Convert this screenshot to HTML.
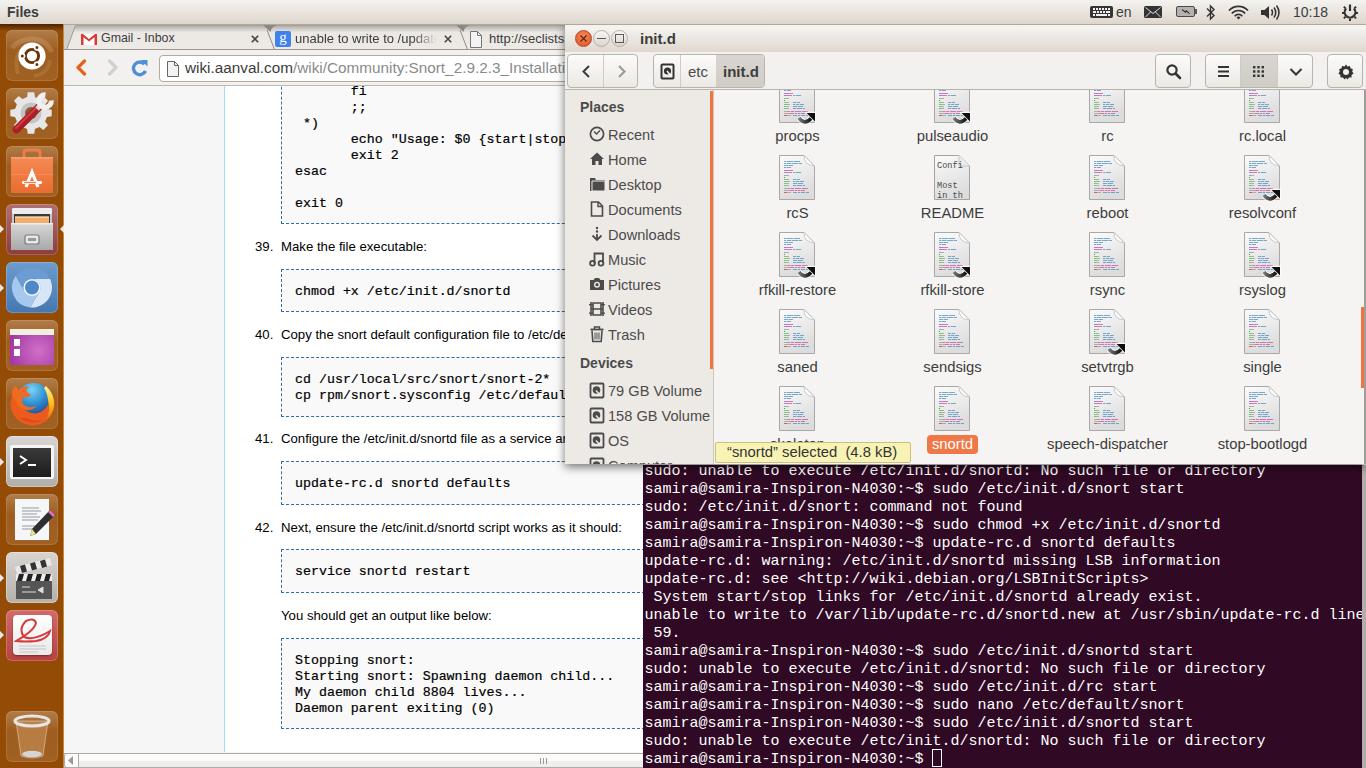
<!DOCTYPE html>
<html><head><meta charset="utf-8">
<style>
*{margin:0;padding:0;box-sizing:border-box}
html,body{width:1366px;height:768px;overflow:hidden;background:#f6f6f6;font-family:"Liberation Sans",sans-serif}
.a{position:absolute}
#panel{left:0;top:0;width:1366px;height:25px;background:linear-gradient(#f4f3f0,#ddd6cc);border-bottom:1px solid #b1a89c}
#launcher{left:0;top:24px;width:64px;height:744px;background:#934b05}
#chrome{left:64px;top:24px;width:1302px;height:744px;background:#f6f6f6}
#tabbar{left:0;top:0;width:1302px;height:26px;background:linear-gradient(#bfbab0,#d8d4cc)}
#toolbar{left:0;top:25px;width:1302px;height:37px;background:#f2f1ef;border-top:1px solid #9c978d;border-bottom:1px solid #bdb9b1}
#page{left:0;top:62px;width:1302px;height:666px;background:#f6f6f6;overflow:hidden}
#hscroll{left:0;top:729px;width:1302px;height:15px;background:linear-gradient(#fbfaf8 50%,#efeeeb 50%);border-top:1px solid #aaa;border-bottom:1px solid #aaa}
#fm{left:565px;top:24px;width:801px;height:440px;background:#f5f4f2;overflow:hidden;box-shadow:0 3px 9px rgba(0,0,0,.55)}
#term{left:643px;top:465px;width:723px;height:303px;background:#300a24;overflow:hidden}
.tab{position:absolute;top:2px;height:24px;width:205px}
.tabt{position:absolute;top:7px;font-size:13px;color:#3c3c3c;white-space:nowrap;overflow:hidden}
.tabx{position:absolute;top:3px;font-size:15px;color:#444}
#url{left:95px;top:5px;width:1200px;height:27px;background:#fff;border:1px solid #b5aa9c;border-radius:4px}
#url span.u{position:absolute;left:25px;top:3px;font-size:15.3px;color:#3c3c3c;white-space:nowrap}
#url span.g{color:#8a8a8a}
/* page */
#leftcol{left:0;top:0;width:160px;height:666px;background:#f6f6f6}
#content{left:160px;top:0;width:1142px;height:666px;background:#fff;border-left:1px solid #a7d7f9}
pre.p{position:absolute;left:217px;background:#f9f9f9;border:1px dashed #2f6fab;font-family:"Liberation Mono",monospace;font-size:13.3px;line-height:16px;-webkit-text-stroke:.2px #000;color:#000;width:700px}
.li{position:absolute;font-size:13.2px;color:#000;white-space:nowrap}

#fmtitle{left:0;top:0;width:801px;height:28px;background:linear-gradient(#f4f3f0 10%,#dfd8cf);border-top:1px solid #c7c1b8}
#fmtool{left:0;top:28px;width:801px;height:38px;background:#f2f1ef;border-bottom:1px solid #b8b3ab}
#side{left:0;top:66px;width:149px;height:374px;background:#edeae6;border-right:1px solid #c9c5bf}
#files{left:150px;top:66px;width:651px;height:374px;background:#f5f4f2;overflow:hidden;border-right:2px solid #a39e95}
.wb{position:absolute;top:5px;width:17px;height:17px;border-radius:50%}
.btn{position:absolute;border:1px solid #b9b4ac;border-radius:4px;background:linear-gradient(#fbfbfa,#ece9e5);height:34px;top:2px;overflow:hidden}
.sep{position:absolute;top:0;width:1px;height:32px;background:#cfcac3}
.sh{position:absolute;left:15px;font-weight:bold;font-size:14px;color:#4b4b4b}
.si{position:absolute;left:43px;font-size:14.6px;color:#4b4b4b;white-space:nowrap}
.sic{position:absolute;left:24px}
.fi{position:absolute;width:155px;text-align:center}
.fi svg{display:block;margin:0 auto}
.fl{font-size:14.8px;color:#3c3c3c;margin-top:4px;line-height:17px;white-space:nowrap}

.tile{position:absolute;left:6px;width:52px;height:51px;border-radius:6px;overflow:hidden}
.tbg{background:linear-gradient(rgba(255,255,255,.28),rgba(255,255,255,.10) 40%,rgba(255,255,255,.12));box-shadow:inset 0 0 0 1px rgba(255,255,255,.12)}
.arrL{position:absolute;left:0;width:0;height:0;border-top:4px solid transparent;border-bottom:4px solid transparent;border-left:4px solid #e8e8e8}
.arrR{position:absolute;left:60px;width:0;height:0;border-top:4px solid transparent;border-bottom:4px solid transparent;border-right:4px solid #e8e8e8}
#tlines{position:absolute;left:1.5px;top:-2px;font-family:"Liberation Mono",monospace;font-size:15px;line-height:18px;color:#fff;white-space:pre}
</style></head><body>
<div id="chrome" class="a">
  <div id="tabbar" class="a">
    <svg class="a" style="left:0;top:0" width="1302" height="26">
      <defs><linearGradient id="tg" x1="0" y1="0" x2="0" y2="1"><stop offset="0" stop-color="#8f8a82"/><stop offset=".1" stop-color="#b9b5ae"/><stop offset=".32" stop-color="#ebe8e4"/><stop offset="1" stop-color="#eeebe7"/></linearGradient></defs>
      <rect x="0" y="0" width="1302" height="26" fill="url(#tg)"/>
      <rect x="0" y="0" width="1302" height="1" fill="#57524b"/>
      <path d="M0 26 L3 26 L11.5 1 L0 1Z" fill="#d2cec8"/>
      <path d="M2.7 25.5 L11.2 2" stroke="#a09b93" stroke-width="1" fill="none"/>
      <path d="M199 1 L213 1 Q207 3 206.5 8Z" fill="#8c877f"/>
      <path d="M203 6 L210.5 25.5" stroke="#8e8982" stroke-width="1" fill="none"/>
      <path d="M392 1 L406 1 Q400 3 399.5 8Z" fill="#8c877f"/>
      <path d="M396 6 L403.5 25.5" stroke="#8e8982" stroke-width="1" fill="none"/>
      <rect x="0" y="25" width="1302" height="1" fill="#aaa59d"/>
    </svg>
    <svg class="a" style="left:17px;top:10px" width="16" height="11" viewBox="0 0 16 11"><rect x="0" y="0" width="16" height="11" fill="#fff"/><path d="M0 0 H2 L8 5 L14 0 H16 V11 H13.5 V3.2 L8 7.6 L2.5 3.2 V11 H0Z" fill="#d93a3a"/></svg>
    <div class="tabt" style="left:37px;width:150px;font-size:12.4px">Gmail - Inbox</div>
    <svg class="a" style="left:187px;top:11px" width="8" height="8"><path d="M.8 .8L7.2 7.2M7.2 .8L.8 7.2" stroke="#444" stroke-width="1.6"/></svg>
    <div class="a" style="left:211px;top:7px;width:16px;height:16px;background:#3f82ee;border-radius:2px;color:#fff;font-size:15px;line-height:13px;text-align:center;font-family:'Liberation Serif',serif">g</div>
    <div class="tabt" style="left:231px;width:148px;-webkit-mask-image:linear-gradient(90deg,#000 118px,transparent 142px)">unable to write to /update-rc.d</div>
    <svg class="a" style="left:380px;top:11px" width="8" height="8"><path d="M.8 .8L7.2 7.2M7.2 .8L.8 7.2" stroke="#444" stroke-width="1.6"/></svg>
    <svg class="a" style="left:405px;top:7px" width="13" height="17" viewBox="0 0 13 17"><path d="M1.5 .5 H8.5 L12.5 4.5 V16.5 H1.5Z" fill="#f4f4f4" stroke="#777"/><path d="M8.5 .5 V4.5 H12.5" fill="none" stroke="#777"/></svg>
    <div class="tabt" style="left:425px;width:140px">http://seclists.org/snort</div>
  </div>
  <div id="toolbar" class="a">
    <svg class="a" style="left:11px;top:9px" width="12" height="17" viewBox="0 0 12 17"><path d="M9.5 2 L3 8.5 L9.5 15" fill="none" stroke="#e4621d" stroke-width="3.2" stroke-linecap="round" stroke-linejoin="round"/></svg>
    <svg class="a" style="left:43px;top:9px" width="12" height="17" viewBox="0 0 12 17"><path d="M2.5 2 L9 8.5 L2.5 15" fill="none" stroke="#d3d0cc" stroke-width="3.2" stroke-linecap="round" stroke-linejoin="round"/></svg>
    <svg class="a" style="left:67px;top:9px" width="18" height="18" viewBox="0 0 18 18"><path d="M13.5 5.2 A6.3 6.3 0 1 0 14.5 12" fill="none" stroke="#4f8fd6" stroke-width="3.4"/><path d="M10 1 L16.5 1 L16.5 7.5Z" fill="#4f8fd6"/></svg>
    <div id="url" class="a">
      <svg class="a" style="left:7px;top:5px" width="12" height="16" viewBox="0 0 12 16"><path d="M.5 .5 H7.5 L11.5 4.5 V15.5 H.5Z" fill="#f2f2f2" stroke="#666"/><path d="M7.5 .5 V4.5 H11.5" fill="none" stroke="#666"/></svg>
      <span class="u">wiki.aanval.com<span class="g">/wiki/Community:Snort_2.9.2.3_Installation_on_Ubuntu_12</span></span>
    </div>
  </div>
  <div id="page" class="a">
    <div id="leftcol" class="a"></div>
    <div id="content" class="a"></div>
    <pre class="p" style="top:-49px;height:187px;padding:14px 0 0 13px">       #
       ;;
       fi
       ;;
 *)
       echo "Usage: $0 {start|stop|restart|status}"
       exit 2
esac

exit 0</pre>
    <div class="li" style="left:191px;top:153px">39.</div><div class="li" style="left:217px;top:153px">Make the file executable:</div>
    <pre class="p" style="top:183px;height:43px;padding:14px 0 0 13px">chmod +x /etc/init.d/snortd</pre>
    <div class="li" style="left:191px;top:241px">40.</div><div class="li" style="left:217px;top:241px">Copy the snort default configuration file to /etc/default/snort:</div>
    <pre class="p" style="top:271px;height:60px;padding:14px 0 0 13px">cd /usr/local/src/snort/snort-2*
cp rpm/snort.sysconfig /etc/default/snort</pre>
    <div class="li" style="left:191px;top:345px">41.</div><div class="li" style="left:217px;top:345px">Configure the /etc/init.d/snortd file as a service and set it to start at boot:</div>
    <pre class="p" style="top:375px;height:44px;padding:14px 0 0 13px">update-rc.d snortd defaults</pre>
    <div class="li" style="left:191px;top:434px">42.</div><div class="li" style="left:217px;top:434px">Next, ensure the /etc/init.d/snortd script works as it should:</div>
    <pre class="p" style="top:463px;height:44px;padding:14px 0 0 13px">service snortd restart</pre>
    <div class="li" style="left:217px;top:522px">You should get an output like below:</div>
    <pre class="p" style="top:552px;height:91px;padding:14px 0 0 13px">Stopping snort:
Starting snort: Spawning daemon child...
My daemon child 8804 lives...
Daemon parent exiting (0)</pre>
  </div>
  <div id="hscroll" class="a"><div class="a" style="left:0;top:-1px;width:15px;height:15px;border:1px solid #aaa;border-radius:3px 0 0 3px;background:#fcfbf9"></div><svg class="a" style="left:4px;top:2px" width="6" height="9"><path d="M5 0V9L0 4.5Z" fill="#9a9a9a"/></svg><div class="a" style="left:476px;top:4px;width:1px;height:6px;background:#999"></div><div class="a" style="left:479px;top:4px;width:1px;height:6px;background:#999"></div><div class="a" style="left:482px;top:4px;width:1px;height:6px;background:#999"></div></div>
</div>
<div id="term" class="a"><div id="tlines">sudo: unable to execute /etc/init.d/snortd: No such file or directory
samira@samira-Inspiron-N4030:~$ sudo /etc/init.d/snort start
sudo: /etc/init.d/snort: command not found
samira@samira-Inspiron-N4030:~$ sudo chmod +x /etc/init.d/snortd
samira@samira-Inspiron-N4030:~$ update-rc.d snortd defaults
update-rc.d: warning: /etc/init.d/snortd missing LSB information
update-rc.d: see &lt;http://wiki.debian.org/LSBInitScripts&gt;
 System start/stop links for /etc/init.d/snortd already exist.
unable to write to /var/lib/update-rc.d/snortd.new at /usr/sbin/update-rc.d line
 59.
samira@samira-Inspiron-N4030:~$ sudo /etc/init.d/snortd start
sudo: unable to execute /etc/init.d/snortd: No such file or directory
samira@samira-Inspiron-N4030:~$ sudo /etc/init.d/rc start
samira@samira-Inspiron-N4030:~$ sudo nano /etc/default/snort
samira@samira-Inspiron-N4030:~$ sudo /etc/init.d/snortd start
sudo: unable to execute /etc/init.d/snortd: No such file or directory
samira@samira-Inspiron-N4030:~$ </div><div class="a" style="left:289px;top:284px;width:10px;height:18px;border:1px solid #fff"></div><div class="a" style="left:719px;top:0;width:4px;height:306px;background:#b3afa8"></div></div>
<svg width="0" height="0" style="position:absolute">
<defs>
<linearGradient id="pg" x1="0" y1="0" x2="0.3" y2="1"><stop offset="0" stop-color="#fbfbfb"/><stop offset="1" stop-color="#dcdcdc"/></linearGradient>
<g id="doc">
 <path d="M.5 .5 H25 L35.5 11 V44.5 H.5Z" fill="url(#pg)" stroke="#a8a8a8"/>
 <path d="M25 .5 Q24.5 10 35.5 11 L25 .5Z" fill="#fdfdfd" stroke="#c8c8c8"/>
 <g opacity=".75"><rect x="5" y="6" width="16" height="1" fill="#4f8fbf"/><rect x="5" y="8" width="18" height="1" fill="#4f8fbf"/><rect x="5" y="10" width="9" height="1" fill="#4f8fbf"/><rect x="5" y="12" width="7" height="1" fill="#4f8fbf"/><rect x="5" y="15" width="3" height="1" fill="#a04fd0"/><rect x="8" y="15" width="6" height="1" fill="#d0509a"/><rect x="5" y="17" width="3" height="1" fill="#a04fd0"/><rect x="8" y="17" width="5" height="1" fill="#d0509a"/><rect x="14" y="17" width="8" height="1" fill="#4f8fbf"/><rect x="5" y="20" width="2" height="1" fill="#4cc040"/><rect x="7" y="20" width="3" height="1" fill="#9a9a9a"/><rect x="5" y="22" width="1" height="1" fill="#555"/><rect x="5" y="24" width="3" height="1" fill="#4cc040"/><rect x="8" y="24" width="2" height="1" fill="#9a9a9a"/><rect x="14" y="24" width="7" height="1" fill="#4f8fbf"/><rect x="5" y="26" width="3" height="1" fill="#4cc040"/><rect x="8" y="26" width="3" height="1" fill="#9a9a9a"/><rect x="14" y="26" width="11" height="1" fill="#4f8fbf"/><rect x="5" y="28" width="2" height="1" fill="#4cc040"/><rect x="7" y="28" width="3" height="1" fill="#9a9a9a"/><rect x="14" y="28" width="10" height="1" fill="#4f8fbf"/><rect x="5" y="30" width="2" height="1" fill="#4cc040"/><rect x="7" y="30" width="3" height="1" fill="#9a9a9a"/><rect x="14" y="30" width="12" height="1" fill="#4f8fbf"/><rect x="5" y="33" width="4" height="1" fill="#9a9a9a"/><rect x="9" y="33" width="20" height="1" fill="#d0509a"/><rect x="5" y="35" width="6" height="1" fill="#9a9a9a"/><rect x="11" y="35" width="15" height="1" fill="#d0509a"/><rect x="5" y="37" width="3" height="1" fill="#e03030"/><rect x="8" y="37" width="4" height="1" fill="#9a9a9a"/><rect x="14" y="37" width="16" height="1" fill="#4f8fbf"/></g><g opacity=".7"><rect x="7" y="6" width="1" height="1" fill="#e6e6e6"/><rect x="14" y="6" width="1" height="1" fill="#e6e6e6"/><rect x="7" y="8" width="1" height="1" fill="#e6e6e6"/><rect x="12" y="8" width="1" height="1" fill="#e6e6e6"/><rect x="19" y="8" width="1" height="1" fill="#e6e6e6"/><rect x="9" y="10" width="1" height="1" fill="#e6e6e6"/><rect x="7" y="12" width="1" height="1" fill="#e6e6e6"/><rect x="16" y="17" width="1" height="1" fill="#e6e6e6"/><rect x="17" y="24" width="1" height="1" fill="#e6e6e6"/><rect x="16" y="26" width="1" height="1" fill="#e6e6e6"/><rect x="20" y="26" width="1" height="1" fill="#e6e6e6"/><rect x="18" y="28" width="1" height="1" fill="#e6e6e6"/><rect x="17" y="30" width="1" height="1" fill="#e6e6e6"/><rect x="23" y="30" width="1" height="1" fill="#e6e6e6"/><rect x="11" y="33" width="1" height="1" fill="#e6e6e6"/><rect x="15" y="33" width="1" height="1" fill="#e6e6e6"/><rect x="22" y="33" width="1" height="1" fill="#e6e6e6"/><rect x="15" y="35" width="1" height="1" fill="#e6e6e6"/><rect x="18" y="35" width="1" height="1" fill="#e6e6e6"/><rect x="21" y="35" width="1" height="1" fill="#e6e6e6"/><rect x="18" y="37" width="1" height="1" fill="#e6e6e6"/><rect x="21" y="37" width="1" height="1" fill="#e6e6e6"/><rect x="26" y="37" width="1" height="1" fill="#e6e6e6"/></g>
</g>
<linearGradient id="lg" x1="0" y1="0" x2="1" y2="0"><stop offset="0" stop-color="#777"/><stop offset="1" stop-color="#111"/></linearGradient>
<g id="lnk">
 <path d="M20 40 Q25.5 47.5 32 40.5" fill="none" stroke="#fff" stroke-width="5.5" opacity=".85"/>
 <path d="M27 34.5 H36.5 V44Z" fill="#fff" stroke="#fff" stroke-width="1.6" stroke-linejoin="round" opacity=".85"/>
 <path d="M20 40 Q25.5 47.5 32 40.5" fill="none" stroke="url(#lg)" stroke-width="3.6"/>
 <path d="M27.5 35 H36 V43.5Z" fill="#0e0e0e"/>
</g>
</defs></svg>
<div id="fm" class="a">
 <div id="fmtitle" class="a">
  <div class="wb" style="left:10px;background:radial-gradient(circle at 50% 35%,#f7885a,#e0501e);border:1px solid #b84a26"></div>
  <svg class="a" style="left:14px;top:9px" width="9" height="9"><path d="M1.5 1.5L7.5 7.5M7.5 1.5L1.5 7.5" stroke="#5a2a18" stroke-width="1.3"/></svg>
  <div class="wb" style="left:28px;background:linear-gradient(#f8f7f5,#d9d5ce);border:1px solid #b5b0a7"></div>
  <div class="a" style="left:32px;top:13px;width:9px;height:1.3px;background:#5c5a55"></div>
  <div class="wb" style="left:46px;background:linear-gradient(#f8f7f5,#d9d5ce);border:1px solid #b5b0a7"></div>
  <div class="a" style="left:50px;top:9px;width:9px;height:9px;border:1.2px solid #5c5a55"></div>
  <div class="a" style="left:75px;top:5px;font-weight:bold;font-size:15px;color:#3c3c3c">init.d</div>
 </div>
 <div id="fmtool" class="a">
  <div class="btn" style="left:2px;width:71px">
   <div class="sep" style="left:35px"></div>
   <svg class="a" style="left:13px;top:9px" width="10" height="15"><path d="M8 2L2.5 7.5L8 13" fill="none" stroke="#3c3c3c" stroke-width="2"/></svg>
   <svg class="a" style="left:49px;top:9px" width="10" height="15"><path d="M2 2L7.5 7.5L2 13" fill="none" stroke="#9c9690" stroke-width="2"/></svg>
  </div>
  <div class="btn" style="left:88px;width:112px">
   <div class="sep" style="left:26px"></div>
   <div class="sep" style="left:62px"></div>
   <div class="a" style="left:62px;top:0;width:50px;height:34px;background:linear-gradient(#d9d6d1,#cfcbc5)"></div>
   <svg class="a" style="left:6px;top:8px" width="16" height="17"><rect x="1.5" y="1.5" width="12" height="14" rx="1" fill="none" stroke="#333" stroke-width="2"/><circle cx="7.5" cy="8" r="3.6" fill="#333"/><path d="M7 8L11 13" stroke="#fff" stroke-width="1.4"/></svg>
   <div class="a" style="left:34px;top:8px;font-size:15px;color:#4b4b4b">etc</div>
   <div class="a" style="left:69px;top:8px;font-size:15px;font-weight:bold;color:#3c3c3c">init.d</div>
  </div>
  <div class="btn" style="left:590px;width:36px">
   <svg class="a" style="left:9px;top:8px" width="18" height="18"><circle cx="7" cy="7" r="4.6" fill="none" stroke="#333" stroke-width="2.2"/><path d="M10.5 10.5L15 15" stroke="#333" stroke-width="2.6" stroke-linecap="round"/></svg>
  </div>
  <div class="btn" style="left:640px;width:108px">
   <div class="sep" style="left:34px"></div>
   <div class="a" style="left:35px;top:0;width:36px;height:34px;background:linear-gradient(#d9d6d1,#cfcbc5)"></div>
   <div class="sep" style="left:71px"></div>
   <svg class="a" style="left:11px;top:10px" width="14" height="14"><path d="M1 2H12M1 6.5H12M1 11H12" stroke="#333" stroke-width="2"/></svg>
   <svg class="a" style="left:47px;top:11px" width="12" height="12"><g fill="#333"><rect x="0" y="0" width="2.4" height="2.4"/><rect x="4.3" y="0" width="2.4" height="2.4"/><rect x="8.6" y="0" width="2.4" height="2.4"/><rect x="0" y="4.3" width="2.4" height="2.4"/><rect x="4.3" y="4.3" width="2.4" height="2.4"/><rect x="8.6" y="4.3" width="2.4" height="2.4"/><rect x="0" y="8.6" width="2.4" height="2.4"/><rect x="4.3" y="8.6" width="2.4" height="2.4"/><rect x="8.6" y="8.6" width="2.4" height="2.4"/></g></svg>
   <svg class="a" style="left:83px;top:12px" width="14" height="10"><path d="M1.5 2L7 7.5L12.5 2" fill="none" stroke="#333" stroke-width="2"/></svg>
  </div>
  <div class="btn" style="left:762px;width:36px">
   <svg class="a" style="left:9px;top:8px" width="18" height="18" viewBox="0 0 18 18"><path d="M9 1.5 L10.4 3.6 L12.9 3 L13.5 5.3 L15.9 6.2 L15.2 8.6 L16.6 10.6 L14.6 12 L14.5 14.5 L12 14.6 L10.6 16.6 L9 15 L7.4 16.6 L6 14.6 L3.5 14.5 L3.4 12 L1.4 10.6 L2.8 8.6 L2.1 6.2 L4.5 5.3 L5.1 3 L7.6 3.6Z" fill="#333"/><circle cx="9" cy="9" r="3" fill="#f2f1ef"/></svg>
  </div>
 </div>
 <div id="side" class="a">
  <div class="sh" style="top:9px">Places</div>
  <div class="si" style="top:37px">Recent</div><div class="sic" style="top:36px"><svg width="16" height="16"><circle cx="8" cy="8" r="6.6" fill="none" stroke="#4b4b4b" stroke-width="1.7"/><path d="M5 5.5L7.5 8L11 4.5" fill="none" stroke="#4b4b4b" stroke-width="1.3"/></svg></div>
  <div class="si" style="top:62px">Home</div><div class="sic" style="top:61px"><svg width="16" height="16"><path d="M8 1.5L1 8H3V14H6.5V10H9.5V14H13V8H15Z" fill="#4b4b4b"/></svg></div>
  <div class="si" style="top:87px">Desktop</div><div class="sic" style="top:86px"><svg width="17" height="16"><path d="M1 2H6L7 4H16V15H1Z" fill="#4b4b4b"/><path d="M3 5H16V15H3Z" fill="#4b4b4b" stroke="#edeae6" stroke-width="1"/></svg></div>
  <div class="si" style="top:112px">Documents</div><div class="sic" style="top:111px"><svg width="16" height="16"><path d="M2.5 1H9.5L13.5 5V15H2.5Z" fill="none" stroke="#4b4b4b" stroke-width="1.6"/><path d="M9 1V5.5H13.5" fill="none" stroke="#4b4b4b" stroke-width="1.4"/></svg></div>
  <div class="si" style="top:137px">Downloads</div><div class="sic" style="top:136px"><svg width="16" height="16"><circle cx="8" cy="2" r="1.2" fill="#4b4b4b"/><circle cx="8" cy="5.5" r="1.2" fill="#4b4b4b"/><path d="M8 8V13M3.5 9.5L8 14L12.5 9.5" fill="none" stroke="#4b4b4b" stroke-width="1.8"/></svg></div>
  <div class="si" style="top:162px">Music</div><div class="sic" style="top:161px"><svg width="16" height="16"><path d="M5.5 12.5V2.5H14V12" fill="none" stroke="#4b4b4b" stroke-width="1.8"/><circle cx="3.5" cy="12.3" r="2.4" fill="none" stroke="#4b4b4b" stroke-width="1.8"/><circle cx="12" cy="12.3" r="2.4" fill="none" stroke="#4b4b4b" stroke-width="1.8"/></svg></div>
  <div class="si" style="top:187px">Pictures</div><div class="sic" style="top:186px"><svg width="16" height="16"><path d="M1 4H4.5L6 2H10L11.5 4H15V14H1Z" fill="#4b4b4b"/><circle cx="8" cy="8.7" r="3" fill="#edeae6"/><circle cx="8" cy="8.7" r="1.6" fill="#4b4b4b"/></svg></div>
  <div class="si" style="top:212px">Videos</div><div class="sic" style="top:211px"><svg width="16" height="16"><path d="M2 1V15M14 1V15M2 8H14M4 2V14H12V2Z" fill="none" stroke="#4b4b4b" stroke-width="1.6"/><g fill="#4b4b4b"><rect x="0" y="3" width="4" height="1.3"/><rect x="0" y="11.5" width="4" height="1.3"/><rect x="12" y="3" width="4" height="1.3"/><rect x="12" y="11.5" width="4" height="1.3"/></g></svg></div>
  <div class="si" style="top:237px">Trash</div><div class="sic" style="top:236px"><svg width="16" height="17"><path d="M1.5 3.5H14.5" stroke="#4b4b4b" stroke-width="1.8"/><path d="M5.5 3V1H10.5V3" fill="none" stroke="#4b4b4b" stroke-width="1.4"/><path d="M3 4.5L3.8 15.5H12.2L13 4.5" fill="none" stroke="#4b4b4b" stroke-width="1.6"/><path d="M6 6.5V13.5M8 6.5V13.5M10 6.5V13.5" stroke="#4b4b4b" stroke-width="1"/></svg></div>
  <div class="si" style="top:293px">79 GB Volume</div><div class="sic" style="top:292px"><svg width="16" height="17"><rect x="1.5" y="1.5" width="13" height="14" rx="1" fill="none" stroke="#4b4b4b" stroke-width="1.8"/><circle cx="7.5" cy="8" r="3.8" fill="#4b4b4b"/><path d="M7 8.5L11 13" stroke="#edeae6" stroke-width="1.4"/></svg></div>
  <div class="si" style="top:318px">158 GB Volume</div><div class="sic" style="top:317px"><svg width="16" height="17"><rect x="1.5" y="1.5" width="13" height="14" rx="1" fill="none" stroke="#4b4b4b" stroke-width="1.8"/><circle cx="7.5" cy="8" r="3.8" fill="#4b4b4b"/><path d="M7 8.5L11 13" stroke="#edeae6" stroke-width="1.4"/></svg></div>
  <div class="si" style="top:343px">OS</div><div class="sic" style="top:342px"><svg width="16" height="17"><rect x="1.5" y="1.5" width="13" height="14" rx="1" fill="none" stroke="#4b4b4b" stroke-width="1.8"/><circle cx="7.5" cy="8" r="3.8" fill="#4b4b4b"/><path d="M7 8.5L11 13" stroke="#edeae6" stroke-width="1.4"/></svg></div>
  <div class="si" style="top:368px">Computer</div><div class="sic" style="top:367px"><svg width="16" height="17"><rect x="1.5" y="1.5" width="13" height="14" rx="1" fill="none" stroke="#4b4b4b" stroke-width="1.8"/><circle cx="7.5" cy="8" r="3.8" fill="#4b4b4b"/><path d="M7 8.5L11 13" stroke="#edeae6" stroke-width="1.4"/></svg></div>
  <div class="sh" style="top:265px">Devices</div>
  <div class="a" style="left:145px;top:1px;width:3px;height:278px;background:#ef7440"></div>
 </div>
 <div id="files" class="a">
  <div class="fi" style="left:5px;top:-12px"><svg width="37" height="46" viewBox="0 0 37 46"><use href="#doc"/><use href="#lnk"/></svg><div class="fl">procps</div></div>
  <div class="fi" style="left:160px;top:-12px"><svg width="37" height="46" viewBox="0 0 37 46"><use href="#doc"/><use href="#lnk"/></svg><div class="fl">pulseaudio</div></div>
  <div class="fi" style="left:315px;top:-12px"><svg width="37" height="46" viewBox="0 0 37 46"><use href="#doc"/></svg><div class="fl">rc</div></div>
  <div class="fi" style="left:470px;top:-12px"><svg width="37" height="46" viewBox="0 0 37 46"><use href="#doc"/></svg><div class="fl">rc.local</div></div>
  <div class="fi" style="left:5px;top:65px"><svg width="37" height="46" viewBox="0 0 37 46"><use href="#doc"/></svg><div class="fl">rcS</div></div>
  <div class="fi" style="left:160px;top:65px"><svg width="37" height="46" viewBox="0 0 37 46"><path d="M.5 .5 H25 L35.5 11 V44.5 H.5Z" fill="url(#pg)" stroke="#a3a3a3"/><path d="M25 .5 V11 H35.5" fill="#ededed" stroke="#c4c4c4"/><text x="3" y="12.5" font-family="Liberation Mono" font-size="8.6" fill="#4a4a4a">Confi</text><text x="3" y="32.5" font-family="Liberation Mono" font-size="8.6" fill="#4a4a4a">Most</text><text x="3" y="42.5" font-family="Liberation Mono" font-size="8.6" fill="#4a4a4a">in th</text></svg><div class="fl">README</div></div>
  <div class="fi" style="left:315px;top:65px"><svg width="37" height="46" viewBox="0 0 37 46"><use href="#doc"/></svg><div class="fl">reboot</div></div>
  <div class="fi" style="left:470px;top:65px"><svg width="37" height="46" viewBox="0 0 37 46"><use href="#doc"/><use href="#lnk"/></svg><div class="fl">resolvconf</div></div>
  <div class="fi" style="left:5px;top:142px"><svg width="37" height="46" viewBox="0 0 37 46"><use href="#doc"/><use href="#lnk"/></svg><div class="fl">rfkill-restore</div></div>
  <div class="fi" style="left:160px;top:142px"><svg width="37" height="46" viewBox="0 0 37 46"><use href="#doc"/><use href="#lnk"/></svg><div class="fl">rfkill-store</div></div>
  <div class="fi" style="left:315px;top:142px"><svg width="37" height="46" viewBox="0 0 37 46"><use href="#doc"/></svg><div class="fl">rsync</div></div>
  <div class="fi" style="left:470px;top:142px"><svg width="37" height="46" viewBox="0 0 37 46"><use href="#doc"/><use href="#lnk"/></svg><div class="fl">rsyslog</div></div>
  <div class="fi" style="left:5px;top:219px"><svg width="37" height="46" viewBox="0 0 37 46"><use href="#doc"/></svg><div class="fl">saned</div></div>
  <div class="fi" style="left:160px;top:219px"><svg width="37" height="46" viewBox="0 0 37 46"><use href="#doc"/></svg><div class="fl">sendsigs</div></div>
  <div class="fi" style="left:315px;top:219px"><svg width="37" height="46" viewBox="0 0 37 46"><use href="#doc"/><use href="#lnk"/></svg><div class="fl">setvtrgb</div></div>
  <div class="fi" style="left:470px;top:219px"><svg width="37" height="46" viewBox="0 0 37 46"><use href="#doc"/></svg><div class="fl">single</div></div>
  <div class="fi" style="left:5px;top:296px"><svg width="37" height="46" viewBox="0 0 37 46"><use href="#doc"/></svg><div class="fl">skeleton</div></div>
  <div class="fi" style="left:160px;top:296px"><svg width="37" height="46" viewBox="0 0 37 46"><use href="#doc"/></svg><div class="fl"><span style="background:#f07746;color:#fff;border-radius:4px;padding:1px 5px 2px">snortd</span></div></div>
  <div class="fi" style="left:315px;top:296px"><svg width="37" height="46" viewBox="0 0 37 46"><use href="#doc"/></svg><div class="fl">speech-dispatcher</div></div>
  <div class="fi" style="left:470px;top:296px"><svg width="37" height="46" viewBox="0 0 37 46"><use href="#doc"/></svg><div class="fl">stop-bootlogd</div></div>
  <div class="a" style="left:646px;top:217px;width:3px;height:81px;background:#ef7440"></div>
 </div>
 <div class="a" style="left:150px;top:418px;width:196px;height:21px;background:#f8f3b4;border:1px solid #cbc27a;border-radius:2px;font-size:14.8px;color:#333;padding:1px 0 0 11px;white-space:nowrap">“snortd” selected&nbsp; (4.8 kB)</div>
</div>
<div id="panel" class="a">
 <div class="a" style="left:7px;top:4px;font-weight:bold;font-size:14px;color:#3c3c3c">Files</div>
 <svg class="a" style="left:1090px;top:6px" width="23" height="12"><rect x="0" y="0" width="23" height="12" rx="2" fill="#353535"/><g fill="#f2f2f2"><rect x="3" y="2" width="2" height="2"/><rect x="6" y="2" width="2" height="2"/><rect x="9" y="2" width="2" height="2"/><rect x="12" y="2" width="2" height="2"/><rect x="15" y="2" width="2" height="2"/><rect x="18" y="2" width="2" height="2"/><rect x="3" y="5" width="3" height="2"/><rect x="7" y="5" width="2" height="2"/><rect x="10" y="5" width="2" height="2"/><rect x="13" y="5" width="2" height="2"/><rect x="16" y="5" width="4" height="2"/><rect x="3" y="8" width="2" height="2"/><rect x="6" y="8" width="11" height="2"/><rect x="18" y="8" width="2" height="2"/></g></svg>
 <div class="a" style="left:1116px;top:4px;font-size:14px;color:#3c3c3c">en</div>
 <svg class="a" style="left:1144px;top:6px" width="18" height="12"><rect x="0" y="0" width="18" height="12" rx="1.5" fill="#333"/><path d="M1.5 1.5L9 7.5L16.5 1.5M1.5 11L6.5 6M16.5 11L11.5 6" fill="none" stroke="#eee" stroke-width="0.9"/></svg>
 <svg class="a" style="left:1176px;top:6px" width="21" height="11"><rect x="0.5" y="0.5" width="18" height="10" rx="1.5" fill="#b4b2ae" stroke="#4a4a4a"/><rect x="19" y="3" width="2" height="5" fill="#5a5a5a"/><path d="M6 3.5L9.5 6.5L10 5L13.5 7.5L10 4.5L9.5 6Z" fill="#222" stroke="#222" stroke-width=".8"/></svg>
 <svg class="a" style="left:1206px;top:4px" width="10" height="17"><path d="M1 4.5L8 11.5L4.5 15V2L8 5.5L1 12.5" fill="none" stroke="#333" stroke-width="1.4"/></svg>
 <svg class="a" style="left:1228px;top:5px" width="21" height="15"><path d="M1 5.5A13 13 0 0 1 20 5.5M3.8 8.5A9 9 0 0 1 17.2 8.5M6.7 11.2A5 5 0 0 1 14.3 11.2" fill="none" stroke="#333" stroke-width="1.7"/><path d="M8.5 12.5L10.5 14.5L12.5 12.5A3 3 0 0 0 8.5 12.5Z" fill="#333"/></svg>
 <svg class="a" style="left:1260px;top:4px" width="21" height="17"><path d="M1 6H4.5L9 2V15L4.5 11H1Z" fill="#333"/><path d="M11.5 5.5Q13.5 8.5 11.5 11.5M14 3.5Q17.5 8.5 14 13.5M16.5 1.5Q21.5 8.5 16.5 15.5" fill="none" stroke="#333" stroke-width="1.5"/></svg>
 <div class="a" style="left:1293px;top:4px;font-size:14px;color:#3c3c3c">10:18</div>
 <svg class="a" style="left:1341px;top:3px" width="18" height="18" viewBox="0 0 18 18"><path d="M5.2 5.5A5.3 5.3 0 1 0 12.8 5.5" fill="none" stroke="#333" stroke-width="2.2"/><path d="M9 1.5V8" stroke="#333" stroke-width="2.2"/><g fill="#333"><rect x="1" y="9" width="2.5" height="2"/><rect x="14.5" y="9" width="2.5" height="2"/><rect x="8" y="15.5" width="2" height="2.5"/><rect x="2.5" y="13.5" width="2.4" height="2" transform="rotate(-45 3.7 14.5)"/><rect x="13" y="13.5" width="2.4" height="2" transform="rotate(45 14.2 14.5)"/><rect x="2.5" y="3.5" width="2.4" height="2" transform="rotate(45 3.7 4.5)"/><rect x="13" y="3.5" width="2.4" height="2" transform="rotate(-45 14.2 4.5)"/></g></svg>
</div>
<div id="launcher" class="a"><div class="a" style="left:0;top:0;width:64px;height:7px;background:linear-gradient(#4b2302,rgba(142,73,6,0))"></div><div class="a" style="left:63px;top:0;width:1px;height:744px;background:#c88a3a"></div><div class="tile tbg" style="top:6px"><svg class="a" style="left:0;top:0" width="52" height="51" viewBox="0 0 52 51">
<path d="M6 18 Q14 8 28 9 Q40 10 46 22" fill="none" stroke="rgba(255,235,210,.16)" stroke-width="5"/>
<path d="M12 44 Q8 30 14 20" fill="none" stroke="rgba(255,235,210,.12)" stroke-width="4"/>
<path d="M44 30 Q42 44 28 46" fill="none" stroke="rgba(255,235,210,.1)" stroke-width="4"/>
<circle cx="26" cy="26" r="13.6" fill="#fff"/>
<circle cx="26" cy="26" r="6.6" fill="none" stroke="#6e3208" stroke-width="2.9"/>
<g fill="#6e3208" stroke="#fff" stroke-width="1.6"><circle cx="16.3" cy="26" r="2.3"/><circle cx="30.9" cy="17.6" r="2.3"/><circle cx="30.9" cy="34.4" r="2.3"/></g>
</svg></div><div class="tile tbg" style="top:64px"><svg class="a" style="left:0;top:0" width="52" height="51" viewBox="0 0 52 51"><path d="M45.7 21.7 L45.7 28.3 L41.0 28.9 L39.1 33.6 L42.0 37.3 L37.3 42.0 L33.6 39.1 L28.9 41.0 L28.3 45.7 L21.7 45.7 L21.1 41.0 L16.4 39.1 L12.7 42.0 L8.0 37.3 L10.9 33.6 L9.0 28.9 L4.3 28.3 L4.3 21.7 L9.0 21.1 L10.9 16.4 L8.0 12.7 L12.7 8.0 L16.4 10.9 L21.1 9.0 L21.7 4.3 L28.3 4.3 L28.9 9.0 L33.6 10.9 L37.3 8.0 L42.0 12.7 L39.1 16.4 L41.0 21.1Z" fill="#e6e6e6"/><circle cx="25" cy="25" r="10.5" fill="#c4c4c4"/><circle cx="25" cy="25" r="6" fill="#8a5a34"/><path d="M10.5 41.5 L33 19" stroke="#a82025" stroke-width="7.5" stroke-linecap="round"/><path d="M10 40 L31 19" stroke="#e04a4e" stroke-width="2.2" stroke-linecap="round" opacity=".7"/><path d="M31 21 L37 15" stroke="#dcdcdc" stroke-width="5"/><path d="M45.3 12.4 A6.3 6.3 0 1 1 39.5 6.7" fill="none" stroke="#f0f0f0" stroke-width="5"/></svg></div><div class="tile tbg" style="top:122px"><svg class="a" style="left:0;top:0" width="52" height="51" viewBox="0 0 52 51">
<defs><linearGradient id="scg" x1="0" y1="0" x2="0" y2="1"><stop offset="0" stop-color="#f48a55"/><stop offset="1" stop-color="#ea6c30"/></linearGradient></defs>
<path d="M18 12V7Q18 4 21 4H31Q34 4 34 7V12" fill="none" stroke="#f07c48" stroke-width="2.8"/>
<path d="M5 11H47V47H5Z" fill="url(#scg)"/>
<rect x="5" y="11" width="42" height="1.5" fill="#f7a07a"/>
<rect x="5" y="28" width="42" height="1" fill="#f79a6a" opacity=".6"/>
<path d="M20 41L26 26L32 41" fill="none" stroke="#fff" stroke-width="3.2"/>
<rect x="16" y="35" width="20" height="3" rx="1.3" fill="#fff"/>
<rect x="18" y="35.8" width="12" height="1.4" fill="#f08050"/>
</svg></div><div class="tile" style="top:180px;background:linear-gradient(#b07070,#8f3c3c);box-shadow:inset 0 0 0 1px rgba(255,255,255,.18)"><svg class="a" style="left:0;top:0" width="52" height="51" viewBox="0 0 52 51">
<defs><linearGradient id="fcg" x1="0" y1="0" x2="0" y2="1"><stop offset="0" stop-color="#d8d8d8"/><stop offset="1" stop-color="#a8a8a8"/></linearGradient></defs>
<path d="M6 6Q6 4 8 4H44Q46 4 46 6V46H6Z" fill="#c9c9c9"/>
<rect x="6" y="4" width="40" height="6" rx="1.5" fill="#ececec"/>
<rect x="8" y="10" width="36" height="9" fill="#3a3a3a"/>
<rect x="9" y="12.5" width="34" height="6.5" fill="#f2ae6c"/>
<rect x="9" y="12.5" width="34" height="1.5" fill="#f8d0a0"/>
<rect x="5" y="19" width="42" height="27" fill="url(#fcg)"/>
<rect x="5" y="19" width="42" height="1.5" fill="#ededed"/>
<rect x="19" y="31" width="14" height="9" rx="2" fill="#e8e8e8" stroke="#7a7a7a" stroke-width="1.2"/>
<rect x="22" y="34" width="8" height="3" fill="#999"/>
</svg></div><div class="tile" style="top:238px;background:linear-gradient(#6d9ccd,#4577b0);box-shadow:inset 0 0 0 1px rgba(255,255,255,.2)"><svg class="a" style="left:0;top:0" width="52" height="51" viewBox="0 0 52 51"><path d="M26.00 17.00 L44.10 17.00 A20 20 0 0 0 9.59 14.07 L18.64 29.75 A8.5 8.5 0 0 1 26.00 17.00 Z" fill="#6b9dd4"/><path d="M33.36 29.75 L24.31 45.43 A20 20 0 0 0 44.10 17.00 L26.00 17.00 A8.5 8.5 0 0 1 33.36 29.75 Z" fill="#d6e6f7"/><path d="M18.64 29.75 L9.59 14.07 A20 20 0 0 0 24.31 45.43 L33.36 29.75 A8.5 8.5 0 0 1 18.64 29.75 Z" fill="#a6c8ec"/><circle cx="26" cy="25.5" r="8.6" fill="#f4f8fc"/><circle cx="26" cy="25.5" r="7" fill="#4f88c9"/></svg></div><div class="tile tbg" style="top:296px"><div class="a" style="left:4px;top:9px;width:44px;height:36px;background:radial-gradient(circle at 65% 60%,#d070c8,#9a2c9c);border-radius:2px"></div><div class="a" style="left:4px;top:9px;width:44px;height:6px;background:#f0efe0"></div><div class="a" style="left:8px;top:19px;width:6px;height:7px;background:#fff"></div><div class="a" style="left:8px;top:29px;width:6px;height:7px;background:#fff"></div></div><div class="tile tbg" style="top:354px"><svg class="a" style="left:0;top:0" width="52" height="51" viewBox="0 0 52 51">
<defs><radialGradient id="ffg" cx=".45" cy=".2" r=".9"><stop offset="0" stop-color="#7dd3f5"/><stop offset=".45" stop-color="#2f8fd0"/><stop offset="1" stop-color="#15307a"/></radialGradient>
<linearGradient id="fft" x1="0" y1="0" x2="0" y2="1"><stop offset="0" stop-color="#fff3a0"/><stop offset=".5" stop-color="#f7c21c"/><stop offset="1" stop-color="#ea6a1a"/></linearGradient></defs>
<circle cx="27.5" cy="22.5" r="17.5" fill="url(#ffg)"/>
<path d="M6.6 16.2 A22 22 0 1 0 47.8 19.8 L42.8 18.5 A14.5 14.5 0 1 1 14.2 18.5 Z" fill="#ec5a1c"/>
<path d="M6 17 Q5 10 10 8 L12 12 Q16 9 23 8 Q19 12 21 14 L25 17 Q22 20 18 19 Q15 22 17 26 Q22 31 31 28 Q26 33 20 32 Q12 30 10 24Z" fill="#ef6a22"/>
<path d="M40 8 Q49 16 48 28 Q47 36 40 42 Q45 32 42 22 Q41 14 38 10Z" fill="url(#fft)"/>
<path d="M14 40 Q24 48 38 42 Q28 44 20 40Z" fill="#d8401a" opacity=".6"/>
</svg></div><div class="tile" style="top:412px;background:linear-gradient(#d8d6d2,#b0aeaa);box-shadow:inset 0 0 0 1px rgba(255,255,255,.3)"><div class="a" style="left:4px;top:9px;width:44px;height:34px;background:#f4f4f4;border-radius:2px"></div><div class="a" style="left:7px;top:12px;width:38px;height:29px;background:linear-gradient(#3a3a3a,#1c1c1c)"></div><svg class="a" style="left:12px;top:18px" width="24" height="14"><path d="M2 2L8 6L2 10" fill="none" stroke="#fff" stroke-width="2"/><rect x="10" y="10" width="8" height="2" fill="#fff"/></svg></div><div class="tile tbg" style="top:470px"><div class="a" style="left:9px;top:5px;width:34px;height:41px;background:#f4f6f8;box-shadow:0 0 1px #888"></div><svg class="a" style="left:13px;top:10px" width="26" height="32"><g stroke="#999" stroke-width="1"><path d="M3 4H20M3 7H22M3 10H18M3 13H21M3 16H19M3 22H20M3 25H16"/></g></svg><svg class="a" style="left:20px;top:14px" width="30" height="30"><path d="M24 2L29 7L10 26L4 28L6 21Z" fill="#2f2f2f"/><path d="M24 2L29 7L27 9L22 4Z" fill="#e070c0"/><path d="M6 21L10 26L4 28Z" fill="#e8e090"/></svg></div><div class="tile" style="top:528px;background:linear-gradient(#d8d4cf,#b5b0aa);box-shadow:inset 0 0 0 1px rgba(255,255,255,.3)"><svg class="a" style="left:4px;top:3px" width="44" height="46" viewBox="0 0 44 46"><path d="M5 12L40 3L42 10L7 19Z" fill="#e8e8e8"/><path d="M10 11L15 9.5L17 16.5L12 18ZM20 8.5L25 7L27 14L22 15.5ZM30 6L35 4.5L37 11.5L32 13Z" fill="#333"/><rect x="6" y="19" width="36" height="7" fill="#eee"/><path d="M9 19H14L12 26H7ZM18 19H23L21 26H16ZM27 19H32L30 26H25ZM36 19H41L39 26H34Z" fill="#222"/><rect x="6" y="26" width="36" height="18" fill="#555"/><path d="M12 32H20M12 37H26M28 35L33 32V38Z" stroke="#ddd" fill="#ddd" stroke-width="1"/></svg></div><div class="tile" style="top:586px;background:linear-gradient(#d46a6a,#b84040);box-shadow:inset 0 0 0 1px rgba(255,255,255,.2)"><div class="a" style="left:7px;top:5px;width:39px;height:40px;background:linear-gradient(#fff,#e9e9e9);border-radius:4px;box-shadow:0 1px 2px rgba(0,0,0,.4)"></div><svg class="a" style="left:8px;top:7px" width="38" height="36"><path d="M2 24Q20 14 22 6Q20 0 12 4Q4 12 10 20Q20 24 36 14Q34 22 22 24Q12 25 2 24Z" fill="none" stroke="#d83a3a" stroke-width="2"/><path d="M5 29H32M5 32H32M5 35H24" stroke="#bbb" stroke-width="0.8"/></svg></div><div class="tile tbg" style="top:687px"><svg class="a" style="left:7px;top:3px" width="38" height="46" viewBox="0 0 38 46"><path d="M3 7L8 42Q19 46 30 42L35 7Z" fill="rgba(230,180,130,.35)" stroke="rgba(255,255,255,.4)"/><ellipse cx="19" cy="7" rx="17" ry="5" fill="none" stroke="#e6e6e6" stroke-width="3.2"/><ellipse cx="19" cy="40" rx="10" ry="3.2" fill="#d5d5d5"/></svg></div><div class="arrL" style="top:201px"></div><div class="arrR" style="top:201px"></div><div class="arrL" style="top:260px"></div><div class="arrL" style="top:434px"></div><div class="arrL" style="top:550px"></div><div class="arrL" style="top:607px"></div></div>
</body></html>
